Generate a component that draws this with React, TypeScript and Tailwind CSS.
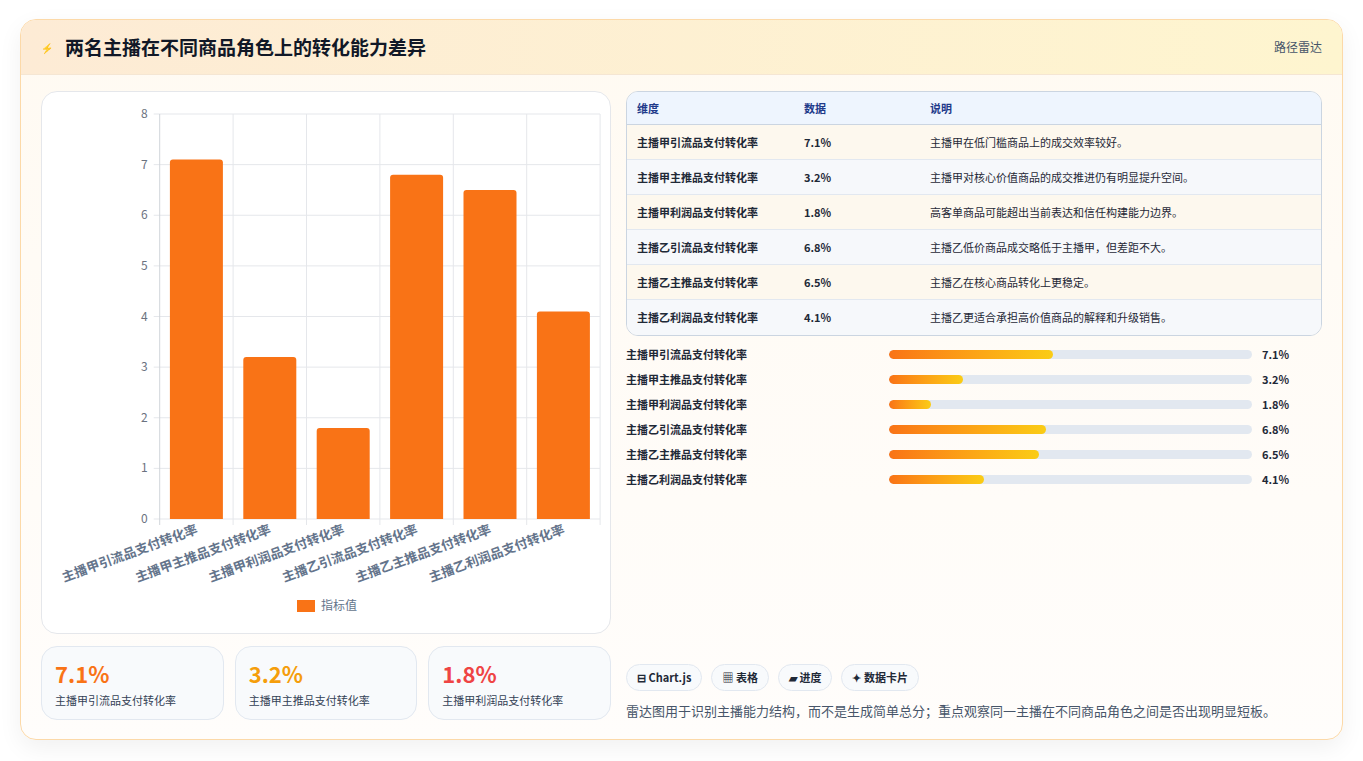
const rows = [
  { name: "主播甲引流品支付转化率", v: 7.1, note: "主播甲在低门槛商品上的成交效率较好。" },
  { name: "主播甲主推品支付转化率", v: 3.2, note: "主播甲对核心价值商品的成交推进仍有明显提升空间。" },
  { name: "主播甲利润品支付转化率", v: 1.8, note: "高客单商品可能超出当前表达和信任构建能力边界。" },
  { name: "主播乙引流品支付转化率", v: 6.8, note: "主播乙低价商品成交略低于主播甲，但差距不大。" },
  { name: "主播乙主推品支付转化率", v: 6.5, note: "主播乙在核心商品转化上更稳定。" },
  { name: "主播乙利润品支付转化率", v: 4.1, note: "主播乙更适合承担高价值商品的解释和升级销售。" },
];

const font = { fontFamily: '"Noto Sans CJK SC", "Noto Sans", sans-serif' };

function Chart() {
  const x0 = 117.7;
  const step = 73.4;
  const top = 22;
  const bottom = 427;
  const unit = (bottom - top) / 8;
  return (
    <svg width="570" height="543" className="block" style={font}>
      {[0, 1, 2, 3, 4, 5, 6, 7, 8].map((t) => (
        <g key={t}>
          <line x1={x0 - 6} x2={558} y1={bottom - t * unit} y2={bottom - t * unit} stroke="#e5e7eb" />
          <text x={x0 - 12} y={bottom - t * unit + 4} fontSize="12" fill="#6b7280" textAnchor="end">{t}</text>
        </g>
      ))}
      {[0, 1, 2, 3, 4, 5, 6].map((i) => (
        <line key={i} x1={x0 + i * step} x2={x0 + i * step} y1={top} y2={bottom + 6} stroke={i === 0 ? "#d1d5db" : "#e5e7eb"} />
      ))}
      {rows.map((r, i) => {
        const cx = x0 + step * i + step / 2;
        const h = r.v * unit;
        return (
          <g key={i}>
            <path d={`M${cx - 26.5} ${bottom} V${bottom - h + 3} Q${cx - 26.5} ${bottom - h} ${cx - 23.5} ${bottom - h} H${cx + 23.5} Q${cx + 26.5} ${bottom - h} ${cx + 26.5} ${bottom - h + 3} V${bottom} Z`} fill="#f97316" />
            <text x={cx + 2} y={bottom + 14} fontSize="13" fontWeight="700" fill="#64748b" textAnchor="end" transform={`rotate(-20 ${cx + 2} ${bottom + 14})`}>{r.name}</text>
          </g>
        );
      })}
      <rect x="255" y="508" width="18" height="12" fill="#f97316" />
      <text x="279" y="518" fontSize="12" fill="#64748b">指标值</text>
    </svg>
  );
}

export default function App() {
  const statColors = ["text-[#f97316]", "text-[#f59e0b]", "text-[#ef4444]"];
  return (
    <div className="w-[1363px] h-[761px] bg-white px-5 pt-[19px] pb-5" style={font}>
      <div className="h-[721px] rounded-2xl border border-[#fcd9a8] bg-gradient-to-b from-[#fffaf2] to-[#fffdfb] shadow-[0_8px_24px_rgba(0,0,0,0.06)] overflow-hidden flex flex-col">
        <div className="h-[55px] shrink-0 flex items-center justify-between px-5 bg-gradient-to-r from-[#fdebd5] to-[#fef5cf] border-b border-[#f5e6d3]">
          <div className="flex items-center gap-3">
            <span className="text-[10px] text-[#6366f1]">⚡</span>
            <span className="text-[19px] font-bold text-[#111827]">两名主播在不同商品角色上的转化能力差异</span>
          </div>
          <span className="text-[12px] text-[#475569]">路径雷达</span>
        </div>
        <div className="flex-1 flex gap-[15px] px-5 pt-[16px]">
          <div className="w-[570px] flex flex-col gap-3">
            <div className="h-[543px] rounded-2xl border border-[#e5e7eb] bg-white overflow-hidden">
              <Chart />
            </div>
            <div className="grid grid-cols-3 gap-[11px]">
              {rows.slice(0, 3).map((r, i) => (
                <div key={i} className="h-[74px] rounded-2xl border border-[#e2e8f0] bg-[#f8fafc] px-[13px] pt-3">
                  <div className={`text-[22px] font-bold leading-7 ${statColors[i]}`}>{r.v}%</div>
                  <div className="text-[11px] text-[#334155] mt-[5px]">{r.name}</div>
                </div>
              ))}
            </div>
          </div>
          <div className="flex-1 flex flex-col">
            <div className="rounded-xl border border-[#cbd5e1] overflow-hidden text-[11px]">
              <div className="h-[33px] flex items-center bg-[#eef5fe] border-b border-[#cbd5e1] text-[#1e3a8a] font-semibold">
                <div className="w-[177px] pl-[10px]">维度</div>
                <div className="w-[126px]">数据</div>
                <div>说明</div>
              </div>
              {rows.map((r, i) => (
                <div key={i} className={`h-[35px] flex items-center text-[#1f2937] ${i < 5 ? "border-b border-[#e2e8f0]" : ""} ${i % 2 === 0 ? "bg-[#fdf8ee]" : "bg-[#f6f8fb]"}`}>
                  <div className="w-[177px] pl-[10px] font-semibold">{r.name}</div>
                  <div className="w-[126px] font-semibold">{r.v}%</div>
                  <div>{r.note}</div>
                </div>
              ))}
            </div>
            <div className="mt-[6px] flex flex-col">
              {rows.map((r, i) => (
                <div key={i} className="h-[25px] flex items-center text-[11px] font-semibold text-[#1f2937]">
                  <div className="w-[263px]">{r.name}</div>
                  <div className="w-[363px] h-[9px] rounded-full bg-[#e2e8f0] overflow-hidden">
                    <div className="h-full rounded-full bg-gradient-to-r from-[#f97316] to-[#facc15]" style={{ width: `${(r.v / 15.7) * 100}%` }} />
                  </div>
                  <div className="ml-[10px]">{r.v}%</div>
                </div>
              ))}
            </div>
            <div className="flex-1" />
            <div className="flex gap-[9px] text-[11px] font-semibold text-[#1f2937]">
              {["⊟ Chart.js", "▦ 表格", "▰ 进度", "✦ 数据卡片"].map((c) => (
                <span key={c} className="h-[27px] px-[10px] flex items-center rounded-full border border-[#e2e8f0] bg-[#f8fafc]">{c}</span>
              ))}
            </div>
            <div className="mt-[10px] mb-[19px] text-[13px] text-[#475569]">雷达图用于识别主播能力结构，而不是生成简单总分；重点观察同一主播在不同商品角色之间是否出现明显短板。</div>
          </div>
        </div>
      </div>
    </div>
  );
}
